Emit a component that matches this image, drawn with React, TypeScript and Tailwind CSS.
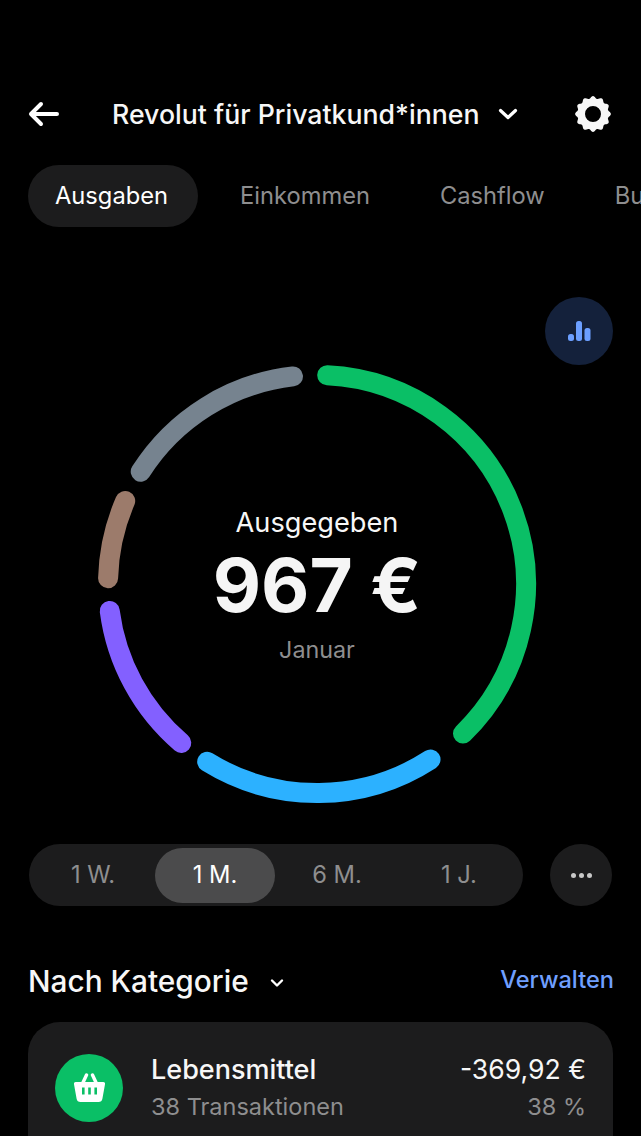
import React from "react";

const font = { fontFamily: "Inter, sans-serif" };

// ring geometry, in px of the 460 box
const C = 230;
const R = 209;

const point = (deg: number) => {
  const a = (deg * Math.PI) / 180;
  return `${(C + R * Math.sin(a)).toFixed(2)} ${(C - R * Math.cos(a)).toFixed(2)}`;
};

const arc = (from: number, to: number) =>
  `M ${point(from)} A ${R} ${R} 0 ${to - from > 180 ? 1 : 0} 1 ${point(to)}`;

// angles clockwise from 12 o'clock
const segments = [
  { color: "#0abf66", from: 2.8, to: 135.7 },
  { color: "#2cb1ff", from: 147.1, to: 211.7 },
  { color: "#8360ff", from: 220.5, to: 262.6 },
  { color: "#9c7b6b", from: 271.6, to: 293.4 },
  { color: "#76838f", from: 302.5, to: 353.4 },
];

const tabs = ["Ausgaben", "Einkommen", "Cashflow", "Budgets"];
const ranges = ["1 W.", "1 M.", "6 M.", "1 J."];

// scalloped outline, 12 shallow teeth
const gearOutline = () => {
  const pts: string[] = [];
  for (let i = 0; i < 144; i++) {
    const t = (i / 144) * Math.PI * 2;
    const r = 16.7 + 1.2 * Math.cos(12 * t);
    pts.push(`${(18 + r * Math.sin(t)).toFixed(2)} ${(18 - r * Math.cos(t)).toFixed(2)}`);
  }
  return `M${pts.join("L")}Z`;
};

const Ring = () => (
  <svg width="460" height="460" viewBox="0 0 460 460" fill="none">
    {segments.map((s) => (
      <path key={s.color} d={arc(s.from, s.to)} stroke={s.color} strokeWidth="20" strokeLinecap="round" />
    ))}
  </svg>
);

const Gear = () => (
  <svg width="36" height="36" viewBox="0 0 36 36">
    <path fillRule="evenodd" fill="#f7f7f7" d={`${gearOutline()}M18 10a8 8 0 1 0 0 16 8 8 0 0 0 0-16z`} />
  </svg>
);

const Basket = () => (
  <svg width="31" height="30" viewBox="0 0 31 30" fill="none">
    <path d="M12.500 2 9 9.500M18.500 2 22 9.500" stroke="#fff" strokeWidth="3.400" strokeLinecap="round" />
    <path
      fillRule="evenodd"
      fill="#fff"
      d="M2 9h27a2 2 0 0 1 2 2.300l-2.600 14.500a4 4 0 0 1-4 3.200H6.600a4 4 0 0 1-4-3.200L0 11.300A2 2 0 0 1 2 9zM8 14.500v7h2.600v-7zM14.200 14.500v7h2.600v-7zM20.400 14.500v7H23v-7z"
    />
  </svg>
);

export default function App() {
  return (
    <div style={font} className="h-[1136px] w-[641px] overflow-hidden bg-black pl-[1px] text-white">
      {/* header */}
      <div className="mt-[90px] flex h-[48px] items-center pl-[27px] pr-[27px]">
        <svg width="32" height="26" viewBox="0 0 32 26" fill="none" className="mr-[52px]">
          <path d="M29 13H3M13 3 3 13l10 10" stroke="#fff" strokeWidth="4" strokeLinecap="round" strokeLinejoin="round" />
        </svg>
        <span className="text-[26.7px] leading-[32px] font-medium text-[#f7f7f7]">Revolut für Privatkund*innen</span>
        <svg width="20" height="14" viewBox="0 0 20 14" fill="none" className="ml-[18px]">
          <path d="M2.500 3.500 10 10.500l7.500-7" stroke="#fff" strokeWidth="3.200" strokeLinecap="round" strokeLinejoin="round" />
        </svg>
        <div className="mr-[3px] ml-auto">
          <Gear />
        </div>
      </div>

      {/* tabs */}
      <div className="mt-[27px] flex h-[62px] items-center pl-[27px] text-[23.7px] leading-[32px] whitespace-nowrap">
        {tabs.map((t, i) => (
          <div
            key={t}
            className={i === 0 ? "mr-[42px] flex h-[62px] w-[170px] shrink-0 items-center rounded-full bg-[#1c1c1d] pl-[27px] text-white" : "mr-[70px] shrink-0 text-[#8e8e8f]"}
          >
            {t}
          </div>
        ))}
      </div>

      {/* chart */}
      <div className="relative mt-[70px] h-[543px]">
        <button className="absolute top-0 right-[28px] flex h-[68px] w-[68px] items-center justify-center rounded-full bg-[#14213b]">
          <svg width="23" height="20" viewBox="0 0 23 20" fill="#6c9fff">
            <rect x="0" y="13" width="6" height="7" rx="2.500" />
            <rect x="8" y="0" width="6" height="20" rx="2.500" />
            <rect x="16.500" y="7" width="6" height="13" rx="2.500" />
          </svg>
        </button>
        <div className="grid justify-center pt-[57px] pr-[8px]">
          <div className="[grid-area:1/1]">
            <Ring />
          </div>
          <div className="flex flex-col items-center pt-[153px] [grid-area:1/1]">
            <span className="text-[27.2px] leading-[32px] text-[#f7f7f7]">Ausgegeben</span>
            <span className="mt-[10px] text-[74.500px] leading-[72px] font-bold text-[#f5f5f5]">967 €</span>
            <span className="mt-[14px] text-[23.300px] leading-[30px] text-[#8e8e8f]">Januar</span>
          </div>
        </div>
      </div>

      {/* range */}
      <div className="mt-[4px] flex items-center pl-[28px]">
        <div className="grid h-[62px] w-[494px] grid-cols-4 items-center rounded-full bg-[#1c1c1d] px-[3px] text-[23.7px]">
          {ranges.map((r, i) => (
            <div
              key={r}
              className={i === 1 ? "flex h-[55px] w-[120px] items-center justify-center justify-self-center rounded-full bg-[#4b4b4c] text-white" : "flex h-[55px] items-center justify-center text-[#8e8e8f]"}
            >
              {r}
            </div>
          ))}
        </div>
        <div className="ml-[27px] flex h-[62px] w-[62px] items-center justify-center gap-[3px] rounded-full bg-[#1c1c1d]">
          <span className="h-[5px] w-[5px] rounded-full bg-[#c8c8c8]" />
          <span className="h-[5px] w-[5px] rounded-full bg-[#c8c8c8]" />
          <span className="h-[5px] w-[5px] rounded-full bg-[#c8c8c8]" />
        </div>
      </div>

      {/* category */}
      <div className="mt-[54px] flex h-[42px] items-center pr-[27px] pl-[27px]">
        <span className="text-[29.800px] leading-[42px] font-medium text-[#f7f7f7]">Nach Kategorie</span>
        <svg width="16" height="12" viewBox="0 0 16 12" fill="none" className="mt-[3px] ml-[20px]">
          <path d="M3 3.500 8 8.500l5-5" stroke="#fff" strokeWidth="2.400" strokeLinecap="round" strokeLinejoin="round" />
        </svg>
        <span className="ml-auto -translate-y-[1px] text-[23.600px] font-medium text-[#6f9fff]">Verwalten</span>
      </div>

      <div className="mt-[20px] ml-[27px] h-[200px] w-[585px] rounded-[32px] bg-[#1c1c1d] px-[27px] pt-[29px]">
        <div className="flex items-center">
          <div className="flex h-[68px] w-[68px] items-center justify-center rounded-full bg-[#0abf66]">
            <Basket />
          </div>
          <div className="ml-[28px]">
            <div className="text-[27px] leading-[37px] font-medium text-[#f7f7f7]">Lebensmittel</div>
            <div className="text-[23.500px] leading-[37px] text-[#8e8e8f]">38 Transaktionen</div>
          </div>
          <div className="ml-auto text-right">
            <div className="text-[26.600px] leading-[37px] text-[#f7f7f7]">-369,92 €</div>
            <div className="text-[23.500px] leading-[37px] text-[#8e8e8f]">38 %</div>
          </div>
        </div>
      </div>
    </div>
  );
}
